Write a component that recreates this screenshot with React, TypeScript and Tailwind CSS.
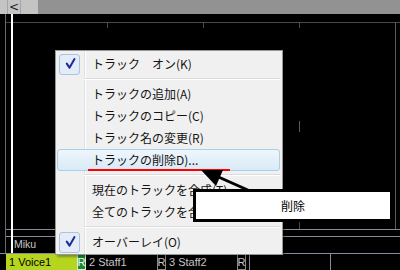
import React from "react";

const jp = { fontFamily: '"Noto Sans CJK JP", "Noto Sans", sans-serif' };
const ui = { fontFamily: '"Liberation Sans", Arial, sans-serif' };

const Check: React.FC = () => (
  <div className="ml-[1px] w-[21px] h-[21px] rounded-[3px] border border-[#a9c3e4] bg-[#e4ecf7] flex items-center justify-center">
    <svg width="21" height="21" viewBox="0 0 21 21">
      <path d="M7.5 9.5 L10.5 14 L16 4.5" fill="none" stroke="#1b2a9c" strokeWidth="2.2" strokeLinecap="round" strokeLinejoin="round" />
    </svg>
  </div>
);

interface ItemProps {
  label: string;
  checked?: boolean;
  active?: boolean;
}

const Item: React.FC<ItemProps> = ({ label, checked = false, active = false }) => (
  <div
    className={`ml-[1px] mr-[2px] h-[22px] flex items-center rounded-[3px] border ${
      active
        ? "border-[#a7d0ec] bg-linear-to-b from-[#eef6fc] to-[#d9eaf6]"
        : "border-transparent"
    }`}
  >
    <div className="w-[27px] h-full flex items-center">{checked && <Check />}</div>
    <span className="pl-[7px] text-[12px] leading-none text-[#141414] whitespace-nowrap">{label}</span>
  </div>
);

const Sep: React.FC = () => (
  <div className="h-[8px] flex flex-col justify-center ml-[28px] mr-[2px]">
    <div className="h-px bg-[#dcdcdc]" />
    <div className="h-px bg-white" />
  </div>
);

const Cell: React.FC<{ label: string; first?: boolean }> = ({ label, first = false }) => (
  <div className="flex h-full">
    <div
      className={`w-[71px] h-full flex items-center pl-[3px] text-[11px] ${
        first ? "bg-[#b6d51e] text-black" : "text-[#c4c4c4]"
      }`}
    >
      {label}
    </div>
    <div
      className={`w-[9px] h-full flex items-center justify-center text-[11px] border ${
        first ? "bg-[#1d8a2e] border-[#d8ead8] text-white" : "border-[#8a8a8a] text-[#c4c4c4]"
      }`}
    >
      R
    </div>
  </div>
);

export default function App() {
  return (
    <div className="w-[400px] h-[270px] bg-black flex flex-col relative overflow-hidden" style={ui}>
      {/* top scroll bar */}
      <div className="h-[14px] flex shrink-0">
        <div className="w-[38px] bg-[#c4c4c4] flex pl-[7px]">
          <div className="w-[14px] h-full border-x border-[#a4a4a4] flex items-center justify-center text-[12px] leading-none text-[#222]" style={{ fontFamily: '"DejaVu Sans", sans-serif' }}>
            &lt;
          </div>
        </div>
        <div className="flex-1 bg-[#929292]" />
      </div>

      {/* piano roll canvas */}
      <div className="flex-1 relative flex flex-col justify-end">
        <svg className="absolute inset-0" width="400" height="239">
          <line x1="5" y1="8.5" x2="400" y2="8.5" stroke="#4a4a4a" />
          <line x1="107.5" y1="8" x2="107.5" y2="14" stroke="#4a4a4a" />
          <line x1="203.5" y1="8" x2="203.5" y2="14" stroke="#4a4a4a" />
          <line x1="299.5" y1="8" x2="299.5" y2="14" stroke="#4a4a4a" />
          <line x1="395.5" y1="8" x2="395.5" y2="215" stroke="#5a5a5a" />
          <line x1="299.5" y1="107" x2="299.5" y2="118" stroke="#5a5a5a" />
          <line x1="299.5" y1="205" x2="299.5" y2="215" stroke="#4a4a4a" />
          <line x1="5" y1="215.5" x2="400" y2="215.5" stroke="#8a8a9c" />
          <line x1="5" y1="222.5" x2="400" y2="222.5" stroke="#8a8a9c" />
          <line x1="5.5" y1="0" x2="5.5" y2="239" stroke="#6a6a6a" />
          <rect x="11" y="0" width="2" height="239" fill="#ffffff" />
        </svg>
        <div className="relative h-[16px] ml-[13px] w-[42px] flex items-center text-[10.5px] text-[#c8c8c8] pl-[1px]">
          Miku
        </div>
      </div>

      {/* track tabs */}
      <div className="h-[17px] shrink-0 border-t border-[#8a8a9c] flex pl-[6px] relative">
        <Cell label="1 Voice1" first />
        <Cell label="2 Staff1" />
        <Cell label="3 Staff2" />
        <div className="w-[3px]" />
        <div className="w-px h-full bg-[#8a8a9c]" />
        <div className="w-[80px]" />
        <div className="w-px h-full bg-[#8a8a9c]" />
      </div>

      {/* context menu */}
      <div className="absolute left-[55px] top-[50px] w-[228px] h-[205px] bg-[#f0f0f0] border border-[#979797] pt-[2px] shadow-[2px_2px_2px_rgba(0,0,0,0.3)]" style={jp}>
        <div className="absolute left-[28px] top-0 bottom-0 w-px bg-[#e0e0e0]" />
        <div className="absolute left-[29px] top-0 bottom-0 w-px bg-white" />
        <div className="relative">
          <Item label="トラック　オン(K)" checked />
          <Sep />
          <Item label="トラックの追加(A)" />
          <Item label="トラックのコピー(C)" />
          <Item label="トラック名の変更(R)" />
          <Item label="トラックの削除D)..." active />
          <Sep />
          <Item label="現在のトラックを合成(T)" />
          <Item label="全てのトラックを合成(U)" />
          <Sep />
          <Item label="オーバーレイ(O)" checked />
        </div>
      </div>

      {/* annotation: red underline */}
      <div className="absolute left-[88px] top-[169px] w-[142px] h-[2px] bg-[#ff0000]" />

      {/* annotation: arrow */}
      <svg className="absolute left-0 top-0" width="400" height="270">
        <line x1="250" y1="191" x2="214" y2="175" stroke="#000" strokeWidth="3" />
        <polygon points="201,170 223,170 216,186" fill="#000" />
      </svg>

      {/* annotation: callout */}
      <div className="absolute left-[193px] top-[189px] w-[200px] h-[33px] bg-white border-[3px] border-black flex items-center justify-center text-[12px] text-black" style={jp}>
        削除
      </div>
    </div>
  );
}
